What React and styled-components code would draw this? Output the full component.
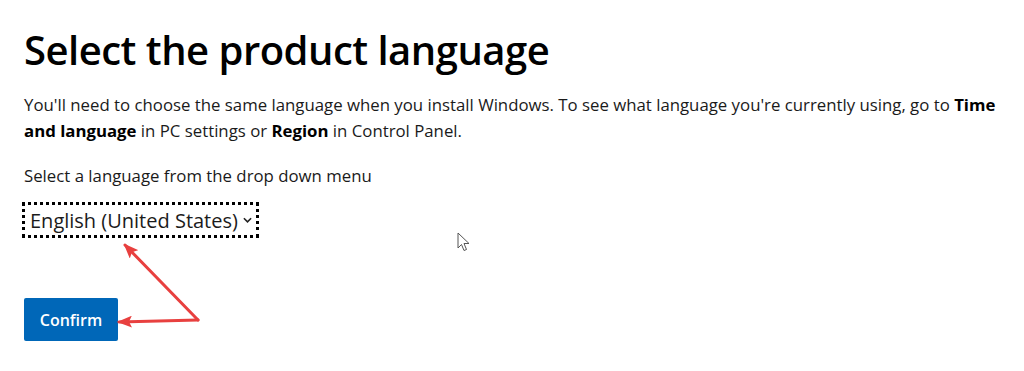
import React from 'react';
import styled, { createGlobalStyle } from 'styled-components';

const GlobalStyle = createGlobalStyle`
    html, body {
        margin: 0;
        padding: 0;
        background: #ffffff;
    }
    body {
        font-family: "Open Sans", "Noto Sans", sans-serif;
        color: #1a1a1a;
    }
`;

function App() {
    return (
        <Page>
            <GlobalStyle />
            <Title>Select the product language</Title>
            <Intro>
                You'll need to choose the same language when you install Windows. To see what language you're
                currently using, go to <b>Time and language</b> in PC settings or <b>Region</b> in Control Panel.
            </Intro>
            <Label htmlFor="lang">Select a language from the drop down menu</Label>
            <SelectBox id="lang">
                <span>English (United States)</span>
                <Chevron viewBox="0 0 10 6">
                    <path d="M1 1 L5 5 L9 1" />
                </Chevron>
            </SelectBox>
            <ConfirmButton>Confirm</ConfirmButton>

            <Overlay viewBox="0 0 1024 371">
                <defs>
                    <marker id="head" viewBox="0 0 15 12" refX="13" refY="6" markerWidth="15" markerHeight="12" markerUnits="userSpaceOnUse" orient="auto">
                        <path d="M0 0 L15 6 L0 12 L3 6 Z" fill="#e8403f" />
                    </marker>
                </defs>
                <line x1="198" y1="320" x2="125" y2="245" stroke="#e8403f" strokeWidth="3" strokeLinecap="round" markerEnd="url(#head)" />
                <line x1="198" y1="320" x2="119" y2="322" stroke="#e8403f" strokeWidth="3" strokeLinecap="round" markerEnd="url(#head)" />
            </Overlay>

            <Cursor viewBox="0 0 14 20">
                <path d="M1 1 L1 16 L4.5 12.5 L7 18.5 L9.5 17.5 L7 11.5 L12 11.5 Z" fill="#ffffff" stroke="#555" strokeWidth="1" strokeLinejoin="round" />
            </Cursor>
        </Page>
    );
}

const Page = styled.div`
    position: relative;
    width: 1024px;
    height: 371px;
    box-sizing: border-box;
    padding: 24px 24px 0 24px;
    overflow: hidden;
`;

const Title = styled.h1`
    margin: 0;
    font-size: 40px;
    font-weight: 600;
    line-height: 52px;
    color: #000;
    letter-spacing: -0.5px;
`;

const Intro = styled.p`
    margin: 16px 0 0 0;
    max-width: 978px;
    font-size: 16.8px;
    line-height: 26px;
    color: #1a1a1a;

    b {
        font-weight: 700;
        color: #000;
    }
`;

const Label = styled.label`
    display: block;
    margin-top: 20px;
    font-size: 16.8px;
    line-height: 24px;
    color: #1a1a1a;
`;

const SelectBox = styled.div`
    margin: 14px 0 0 -2px;
    width: 237px;
    height: 36px;
    box-sizing: border-box;
    border: 3px dotted #000;
    display: flex;
    align-items: center;
    gap: 5px;
    padding: 0 0 0 5px;
    font-size: 20px;
    color: #1b1b1b;
    background: #fff;
`;

const Chevron = styled.svg`
    width: 9px;
    height: 6px;
    fill: none;
    stroke: #222;
    stroke-width: 1.8;
`;

const ConfirmButton = styled.button`
    display: block;
    margin-top: 60px;
    width: 94px;
    height: 43px;
    border: none;
    border-radius: 2px;
    background: #0067b8;
    color: #fff;
    font-family: "Open Sans", "Noto Sans", sans-serif;
    font-size: 16px;
    font-weight: 600;
    cursor: pointer;
`;

const Overlay = styled.svg`
    position: absolute;
    left: 0;
    top: 0;
    width: 1024px;
    height: 371px;
    pointer-events: none;
`;

const Cursor = styled.svg`
    position: absolute;
    left: 457px;
    top: 232px;
    width: 14px;
    height: 20px;
`;

export default App;
